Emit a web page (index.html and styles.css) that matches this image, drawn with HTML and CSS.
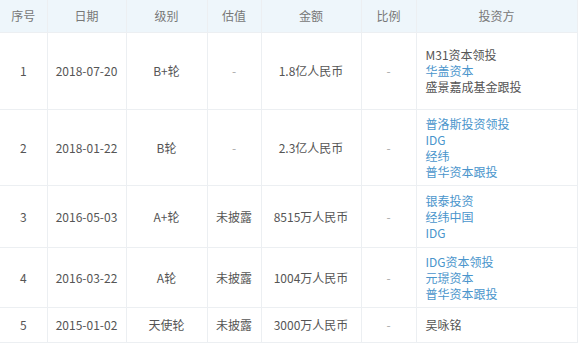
FILE: index.html
```html
<!DOCTYPE html>
<html lang="zh">
<head>
<meta charset="utf-8">
<link rel="stylesheet" href="styles.css">
</head>
<body>
<table class="fin">
  <colgroup>
    <col class="c1"><col class="c2"><col class="c3"><col class="c4"><col class="c5"><col class="c6"><col class="c7">
  </colgroup>
  <thead>
    <tr class="head"><th>序号</th><th>日期</th><th>级别</th><th>估值</th><th>金额</th><th>比例</th><th>投资方</th></tr>
  </thead>
  <tbody>
    <tr class="r1">
      <td>1</td><td>2018-07-20</td><td>B+轮</td><td class="dash">-</td><td>1.8亿人民币</td><td class="dash">-</td>
      <td class="inv"><div>M31资本领投</div><div class="lnk">华盖资本</div><div>盛景嘉成基金跟投</div></td>
    </tr>
    <tr class="r2">
      <td>2</td><td>2018-01-22</td><td>B轮</td><td class="dash">-</td><td>2.3亿人民币</td><td class="dash">-</td>
      <td class="inv"><div class="lnk">普洛斯投资领投</div><div class="lnk">IDG</div><div class="lnk">经纬</div><div class="lnk">普华资本跟投</div></td>
    </tr>
    <tr class="r3">
      <td>3</td><td>2016-05-03</td><td>A+轮</td><td>未披露</td><td>8515万人民币</td><td class="dash">-</td>
      <td class="inv"><div class="lnk">银泰投资</div><div class="lnk">经纬中国</div><div class="lnk">IDG</div></td>
    </tr>
    <tr class="r4">
      <td>4</td><td>2016-03-22</td><td>A轮</td><td>未披露</td><td>1004万人民币</td><td class="dash">-</td>
      <td class="inv"><div class="lnk">IDG资本领投</div><div class="lnk">元璟资本</div><div class="lnk">普华资本跟投</div></td>
    </tr>
    <tr class="r5">
      <td>5</td><td>2015-01-02</td><td>天使轮</td><td>未披露</td><td>3000万人民币</td><td class="dash">-</td>
      <td class="inv"><div>吴咏铭</div></td>
    </tr>
  </tbody>
</table>
</body>
</html>
```

FILE: styles.css
```css
html, body {
  margin: 0;
  padding: 0;
  background: #ffffff;
}
.fin {
  border-collapse: collapse;
  table-layout: fixed;
  width: 577px;
  font-family: "Noto Sans CJK SC", "Noto Sans", sans-serif;
  font-size: 12px;
  color: #555;
}
.c1 { width: 47px; }
.c2 { width: 79px; }
.c3 { width: 81px; }
.c4 { width: 54px; }
.c5 { width: 100px; }
.c6 { width: 55px; }
.c7 { width: 161px; }
.fin th, .fin td {
  border: 1px solid #eceff2;
  text-align: center;
  vertical-align: middle;
  padding: 0;
  line-height: 16px;
}
.fin th:first-child, .fin td:first-child { border-left: none; }
.head th {
  background: #eef6fb;
  font-weight: normal;
  color: #777;
  height: 32px;
  border-top: none;
}
.r1 td { height: 76px; }
.r2 td { height: 75px; }
.r3 td { height: 61px; }
.r4 td { height: 59px; }
.r5 td { height: 34px; }
.dash { color: #aaa; }
.fin td.inv {
  text-align: left;
  padding-left: 9px;
}
.lnk { color: #4a95cc; }
```
